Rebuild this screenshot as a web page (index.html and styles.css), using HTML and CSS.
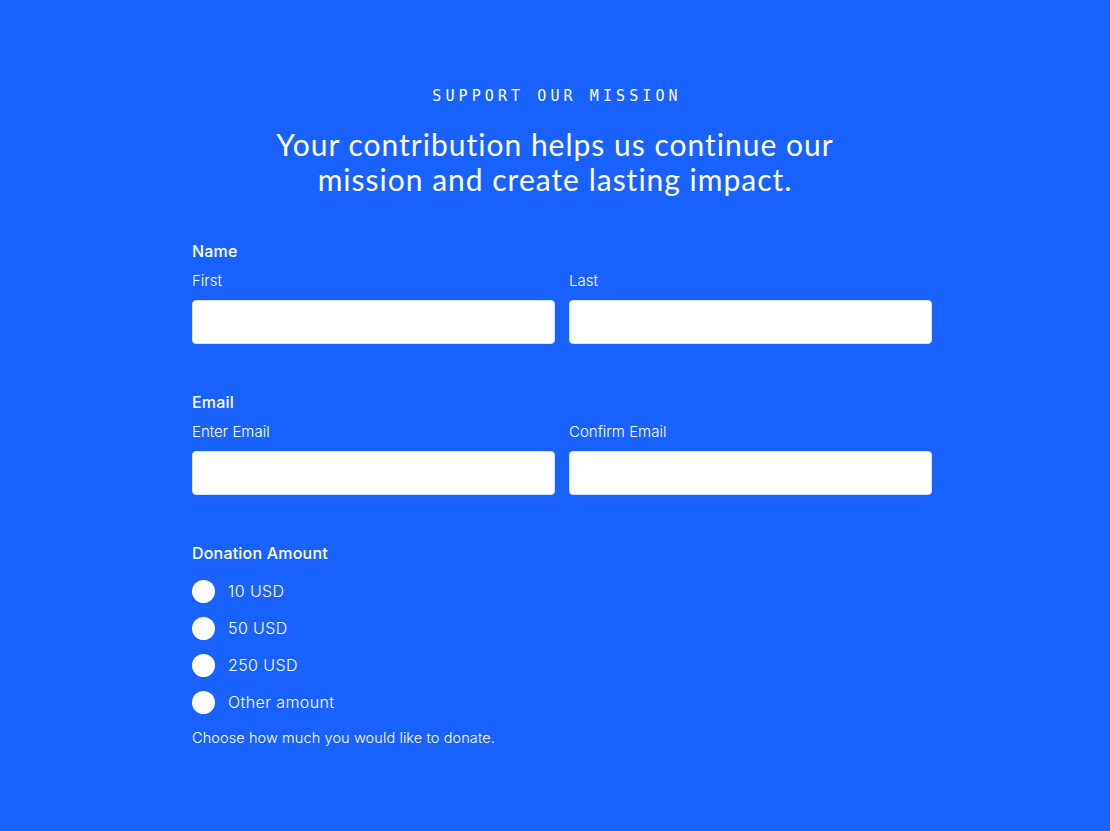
FILE: index.html
```html
<!DOCTYPE html>
<html>
<head>
<meta charset="utf-8">
<link rel="stylesheet" href="styles.css">
</head>
<body>
<main class="page">
  <header class="intro">
    <p class="eyebrow">SUPPORT OUR MISSION</p>
    <h1 class="title">Your contribution helps us continue our<br>mission and create lasting impact.</h1>
  </header>
  <form class="form">
    <fieldset class="group">
      <legend class="group-label">Name</legend>
      <div class="row">
        <label class="field"><span class="sub">First</span><input class="input" type="text"></label>
        <label class="field"><span class="sub">Last</span><input class="input" type="text"></label>
      </div>
    </fieldset>
    <fieldset class="group">
      <legend class="group-label">Email</legend>
      <div class="row">
        <label class="field"><span class="sub">Enter Email</span><input class="input" type="email"></label>
        <label class="field"><span class="sub">Confirm Email</span><input class="input" type="email"></label>
      </div>
    </fieldset>
    <fieldset class="group">
      <legend class="group-label">Donation Amount</legend>
      <div class="radios">
        <label class="radio"><span class="dot"></span>10 USD</label>
        <label class="radio"><span class="dot"></span>50 USD</label>
        <label class="radio"><span class="dot"></span>250 USD</label>
        <label class="radio"><span class="dot"></span>Other amount</label>
      </div>
      <p class="help">Choose how much you would like to donate.</p>
    </fieldset>
  </form>
</main>
</body>
</html>
```
FILE: styles.css
```css
html, body {
  margin: 0;
  padding: 0;
  background: #1a62ff;
  color: #ffffff;
  font-family: "Inter", "Noto Sans", sans-serif;
}
.page {
  padding-top: 85px;
  height: 746px;
}
.intro {
  text-align: center;
}
.eyebrow {
  margin: 0;
  font-family: "DejaVu Sans Mono", "Liberation Mono", monospace;
  font-size: 15px;
  letter-spacing: 4.1px;
  line-height: 22px;
  font-weight: 400;
  padding-left: 4px;
}
.title {
  margin: 20px 0 0;
  font-family: "Lato", "Inter", sans-serif;
  font-weight: 400;
  font-size: 30px;
  line-height: 35px;
  letter-spacing: 1px;
}
.form {
  margin-top: 44px;
  margin-left: calc(50% - 363px);
  width: 740px;
}
.group {
  border: 0;
  margin: 0 0 48px;
  padding: 0;
}
.group-label {
  padding: 0;
  font-size: 16px;
  line-height: 20px;
  font-weight: 500;
  letter-spacing: 0.2px;
  margin-bottom: 10px;
}
.row {
  display: flex;
  gap: 14px;
}
.field {
  flex: 1;
  display: flex;
  flex-direction: column;
}
.sub {
  font-size: 15px;
  line-height: 20px;
  font-weight: 300;
  margin-bottom: 9px;
}
.input {
  height: 44px;
  box-sizing: border-box;
  border: 1px solid #d6e2ff;
  border-radius: 4px;
  background: #fff;
  margin: 0;
}
.radios {
  display: flex;
  flex-direction: column;
  gap: 14px;
  margin-top: 7px;
}
.radio {
  display: flex;
  align-items: center;
  gap: 13px;
  font-size: 16px;
  line-height: 23px;
  font-weight: 300;
  letter-spacing: 0.4px;
}
.dot {
  width: 23px;
  height: 23px;
  border-radius: 50%;
  background: #fff;
}
.help {
  margin: 14px 0 0;
  font-size: 14.5px;
  line-height: 20px;
  font-weight: 300;
  letter-spacing: 0.1px;
}
```
